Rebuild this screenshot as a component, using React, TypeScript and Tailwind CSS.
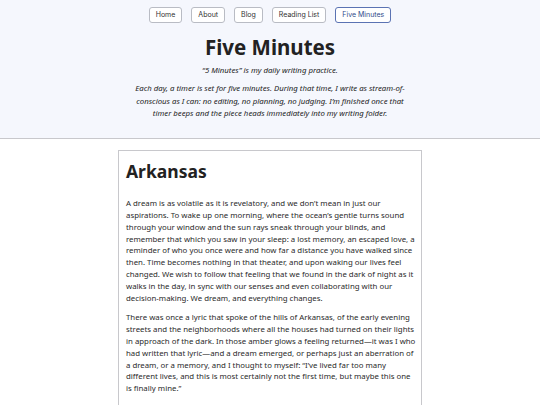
import React from 'react';

const links = ['Home', 'About', 'Blog', 'Reading List', 'Five Minutes'];

export default function App() {
  return (
    <div className="min-h-screen bg-white text-[#222] font-['Noto_Sans',sans-serif]">
      <header className="bg-[#f5f7fd] border-b border-[#c8c8cc] pb-[18px]">
        <nav className="flex justify-center gap-[9px] pt-[7px]">
          {links.map((l) => (
            <a
              key={l}
              className={`h-[16px] px-[6px] flex items-center rounded-[3px] border text-[7px] font-['Inter',sans-serif] bg-white ${
                l === 'Five Minutes' ? 'border-[#5b73b3] text-[#2f4a8a]' : 'border-[#b9bcc4] text-[#333]'
              }`}
            >
              {l}
            </a>
          ))}
        </nav>
        <h1 className="text-center text-[20.5px] font-bold leading-none mt-[14px]">Five Minutes</h1>
        <p className="text-center italic text-[7.8px] mt-[7px]">“5 Minutes” is my daily writing practice.</p>
        <p className="text-center italic text-[7.8px] leading-[12.5px] mx-auto w-[280px] mt-[6px]">
          Each day, a timer is set for five minutes. During that time, I write as stream-of-conscious as I can: no
          editing, no planning, no judging. I’m finished once that timer beeps and the piece heads immediately into my
          writing folder.
        </p>
      </header>
      <main className="pt-[11px]">
        <article className="mx-auto w-[304px] bg-white border border-[#c8c8cc] pl-[7px] pr-[3px] pt-[12px] pb-4">
          <h2 className="text-[17.5px] font-bold leading-none">Arkansas</h2>
          <div className="text-[7.83px] leading-[11.8px] text-[#2a2a2a] mt-[18px] space-y-[8px]">
            <p>
              A dream is as volatile as it is revelatory, and we don’t mean in just our aspirations. To wake up one
              morning, where the ocean’s gentle turns sound through your window and the sun rays sneak through your
              blinds, and remember that which you saw in your sleep: a lost memory, an escaped love, a reminder of who
              you once were and how far a distance you have walked since then. Time becomes nothing in that theater,
              and upon waking our lives feel changed. We wish to follow that feeling that we found in the dark of night
              as it walks in the day, in sync with our senses and even collaborating with our decision-making. We
              dream, and everything changes.
            </p>
            <p>
              There was once a lyric that spoke of the hills of Arkansas, of the early evening streets and the
              neighborhoods where all the houses had turned on their lights in approach of the dark. In those amber
              glows a feeling returned—it was I who had written that lyric—and a dream emerged, or perhaps just an
              aberration of a dream, or a memory, and I thought to myself: “I’ve lived far too many different lives,
              and this is most certainly not the first time, but maybe this one is finally mine.”
            </p>
          </div>
        </article>
      </main>
    </div>
  );
}
